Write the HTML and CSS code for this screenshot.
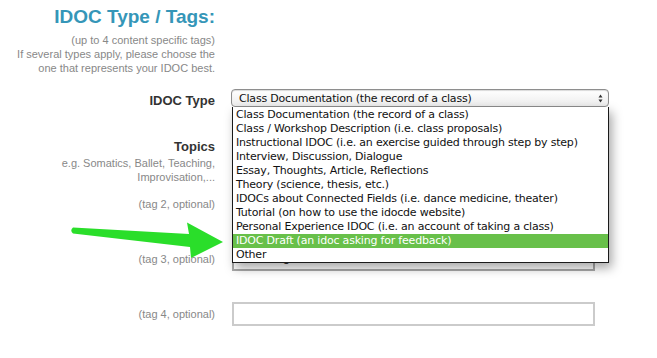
FILE: index.html
```html
<!DOCTYPE html>
<html lang="en">
<head>
  <meta charset="UTF-8">
  <title>IDOC Type / Tags</title>
  <link rel="stylesheet" href="styles.css">
</head>
<body>
  <div class="page">
    <div class="head">
      <h1>IDOC Type / Tags:</h1>
      <p class="intro">(up to 4 content specific tags)<br>If several types apply, please choose the<br>one that represents your IDOC best.</p>
    </div>

    <div class="form">
      <div class="row row-type">
        <label class="label label-type">IDOC Type</label>
        <div class="field">
          <div class="select">
            <span>Class Documentation (the record of a class)</span>
            <svg class="arrows" width="5" height="9" viewBox="0 0 5 9">
              <path d="M0.5 3.5 L2.5 0.5 L4.5 3.5 Z M0.5 5.5 L2.5 8.5 L4.5 5.5 Z" fill="#333"/>
            </svg>
          </div>
          <ul class="menu">
            <li>Class Documentation (the record of a class)</li>
            <li>Class / Workshop Description (i.e. class proposals)</li>
            <li>Instructional IDOC (i.e. an exercise guided through step by step)</li>
            <li>Interview, Discussion, Dialogue</li>
            <li>Essay, Thoughts, Article, Reflections</li>
            <li>Theory (science, thesis, etc.)</li>
            <li>IDOCs about Connected Fields (i.e. dance medicine, theater)</li>
            <li>Tutorial (on how to use the idocde website)</li>
            <li>Personal Experience IDOC (i.e. an account of taking a class)</li>
            <li class="selected">IDOC Draft (an idoc asking for feedback)</li>
            <li>Other</li>
          </ul>
        </div>
      </div>

      <div class="row">
        <div class="label">
          <div class="label-topics">Topics</div>
          <div class="hint">e.g. Somatics, Ballet, Teaching,<br>Improvisation,...</div>
        </div>
        <div class="field"><input class="input" type="text" value="Somatics"></div>
      </div>

      <div class="row">
        <div class="label hint-label">(tag 2, optional)</div>
        <div class="field"><input class="input" type="text" value="Ballet"></div>
      </div>

      <div class="row">
        <div class="label hint-label">(tag 3, optional)</div>
        <div class="field"><input class="input input-shaded" type="text" value="Teaching"></div>
      </div>

      <div class="row">
        <div class="label hint-label">(tag 4, optional)</div>
        <div class="field"><input class="input" type="text" value=""></div>
      </div>
    </div>

    <!-- annotation arrow -->
    <svg class="arrow" width="657" height="358" viewBox="0 0 657 358">
      <path d="M73 227.5 L189 234 L187 222.5 L223 242 L191 258 L190 247 L73 233.5 Q69.5 230.5 73 227.5 Z" fill="#2ade2a"/>
    </svg>
  </div>
</body>
</html>
```

FILE: styles.css
```css
body {
  margin: 0;
  background-color: #fff;
  font-family: 'Liberation Sans', Arial, sans-serif;
}
.page {
  position: relative;
  width: 657px;
  height: 358px;
  overflow: hidden;
}
.head {
  width: 215px;
  text-align: right;
  padding-top: 5px;
}
h1 {
  margin: 0;
  font-size: 19px;
  line-height: 24px;
  color: #3596b8;
}
.intro {
  margin: 4px 0 0;
  font-size: 11px;
  line-height: 14px;
  color: #888;
}
.form {
  margin-top: 14px;
}
.row {
  display: grid;
  grid-template-columns: 215px 378px;
  column-gap: 16px;
  align-items: start;
  height: 55px;
}
.row-type {
  height: 48px;
}
.label {
  text-align: right;
}
.label-type {
  padding-top: 3px;
  font-size: 13px;
  line-height: 18px;
  font-weight: bold;
  color: #333;
}
.label-topics {
  font-size: 13px;
  line-height: 19px;
  font-weight: bold;
  color: #333;
}
.hint {
  font-size: 11px;
  line-height: 14px;
  color: #888;
}
.hint-label {
  font-size: 11px;
  line-height: 24px;
  color: #888;
}
.field {
  position: relative;
}
.select {
  display: flex;
  justify-content: space-between;
  align-items: center;
  box-sizing: border-box;
  height: 18px;
  padding: 0 5px 0 7px;
  border: 1px solid #8e8e8e;
  border-radius: 4px;
  background: linear-gradient(#fff, #ececec);
  box-shadow: inset 0 1px 1px rgba(0,0,0,0.15);
  font-family: 'DejaVu Sans', sans-serif;
  font-size: 11px;
  letter-spacing: -0.2px;
  color: #111;
}
.arrows {
  display: block;
}
.menu {
  position: absolute;
  top: 18px;
  left: 1px;
  right: 0;
  margin: 0;
  padding: 1px 0 0;
  list-style: none;
  background-color: #fff;
  border: 1px solid #1a1a1a;
  border-top: none;
  box-shadow: 3px 5px 10px rgba(0,0,0,0.35);
  font-family: 'DejaVu Sans', sans-serif;
  font-size: 11px;
  letter-spacing: -0.2px;
  color: #111;
  z-index: 2;
}
.menu li {
  height: 14px;
  line-height: 14px;
  padding-left: 3px;
  white-space: nowrap;
}
.menu .selected {
  background-color: #68c04a;
  color: #fff;
}
.input {
  display: block;
  box-sizing: border-box;
  width: 363px;
  height: 24px;
  margin: 0 0 0 1px;
  padding: 0 4px;
  border: 2px solid #cbcbcb;
  background: #fff;
  font-family: 'Liberation Sans', Arial, sans-serif;
  font-size: 13px;
  color: #111;
}
.input-shaded {
  padding-bottom: 6px;
  border-color: #a9a9a9;
}
.arrow {
  position: absolute;
  top: 0;
  left: 0;
  pointer-events: none;
  z-index: 3;
}
```
